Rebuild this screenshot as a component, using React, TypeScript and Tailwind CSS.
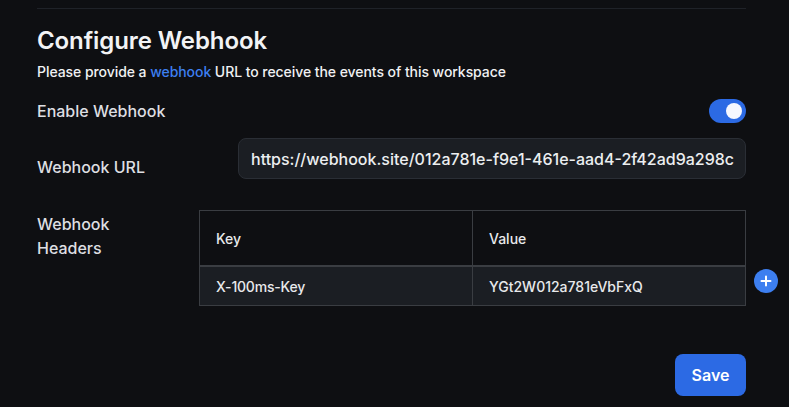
import React from "react";

export default function App() {
  return (
    <div
      className="w-[789px] h-[407px] bg-[#0e0f12] text-[#e8e9eb] overflow-hidden"
      style={{ fontFamily: "Inter, 'Noto Sans', sans-serif" }}
    >
      <div className="pl-[37px] pr-[43px] pt-2">
        <div className="border-t border-[#1f2228]" />
        <h1 className="mt-[18px] text-[24px] leading-[28px] font-semibold text-[#f2f3f5] tracking-[-0.1px]">
          Configure Webhook
        </h1>
        <p className="mt-[7px] text-[14px] leading-[20px] font-medium text-[#f0f1f3] tracking-[-0.06px]">
          Please provide a <span className="text-[#3d7ff0]">webhook</span> URL to receive the events of this workspace
        </p>
        <div className="mt-[17px] flex items-center justify-between h-[24px]">
          <span className="text-[16px] font-medium text-[#dedfe2]">Enable Webhook</span>
          <div className="w-[37px] h-[24px] rounded-full bg-[#2c6ae4] flex items-center justify-end pr-[4px]">
            <div className="w-[16px] h-[16px] rounded-full bg-[#f7f8ff]" />
          </div>
        </div>
        <div className="mt-[15px] flex items-start">
          <span className="w-[201px] pt-[19px] text-[16px] leading-[20px] font-medium text-[#dedfe2]">
            Webhook URL
          </span>
          <div className="flex-1 h-[41px] rounded-[8px] bg-[#1b1e23] border border-[#2a2e35] flex items-center pl-[12px] text-[16px] font-medium text-[#eceef0]">
            https://webhook.site/012a781e-f9e1-461e-aad4-2f42ad9a298c
          </div>
        </div>
        <div className="mt-[31px] flex items-start">
          <div className="w-[162px] pt-[2px] text-[16px] leading-[24px] font-medium text-[#dedfe2]">
            Webhook
            <br />
            Headers
          </div>
          <div className="relative flex-1">
            <div className="border border-[#3a3d42] text-[14px] font-medium">
              <div className="grid grid-cols-[273px_1fr] h-[54px] bg-[#0e0f12]">
                <div className="flex items-center pl-[16px] border-r border-[#3a3d42]">Key</div>
                <div className="flex items-center pl-[16px]">Value</div>
              </div>
              <div className="grid grid-cols-[273px_1fr] h-[40px] bg-[#1b1e23] border-t-2 border-[#3a3d42]">
                <div className="flex items-center pl-[16px] border-r border-[#3a3d42] tracking-[-0.2px]">X-100ms-Key</div>
                <div className="flex items-center pl-[16px]">YGt2W012a781eVbFxQ</div>
              </div>
            </div>
            <div className="absolute right-[-32px] top-[59px] w-[24px] h-[24px] rounded-full bg-[#3d7ff0] flex items-center justify-center">
              <svg width="12" height="12" viewBox="0 0 12 12">
                <path d="M6 1.5v9M1.5 6h9" stroke="#ffffff" strokeWidth="2" strokeLinecap="round" />
              </svg>
            </div>
          </div>
        </div>
        <div className="mt-[48px] flex justify-end">
          <button className="w-[71px] h-[42px] rounded-[8px] bg-[#2c6ae4] text-white text-[16px] font-semibold">
            Save
          </button>
        </div>
      </div>
    </div>
  );
}
